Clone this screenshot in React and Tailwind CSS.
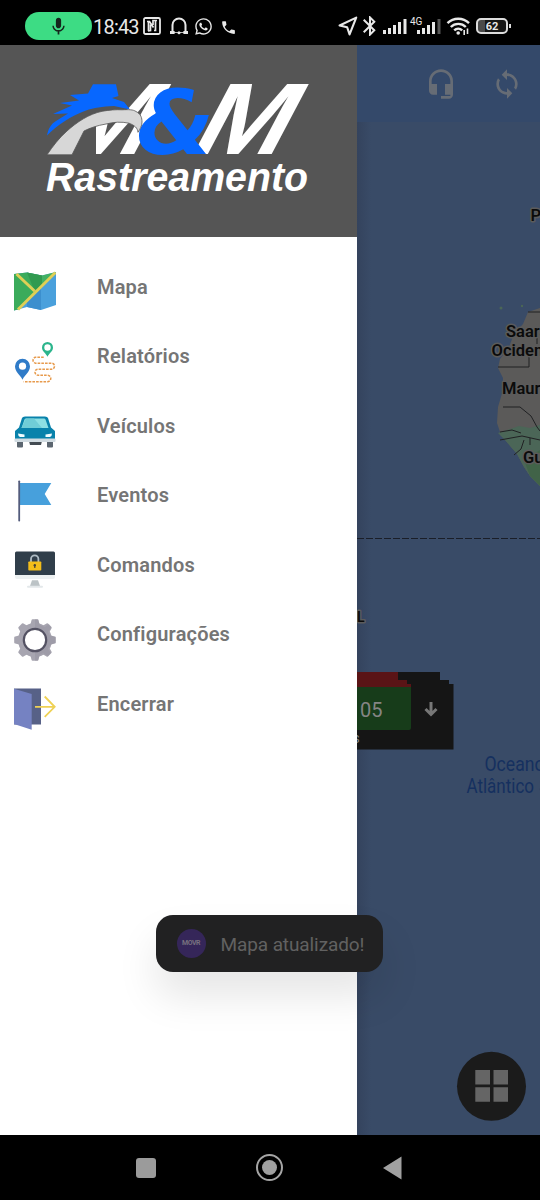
import React from "react";
import { MdHeadsetMic, MdSync, MdMic, MdBluetooth, MdPhone } from "react-icons/md";
import { FaWhatsapp } from "react-icons/fa";

function StatusBar() {
  return (
    <header className="flex h-[45px] shrink-0 items-center bg-black pt-[7px] pl-[25px] text-[#e8e8e8]">
      <div className="flex h-7 w-[67px] items-center justify-center rounded-full bg-[#3ddc84] text-[#15251c]">
        <MdMic size={21} />
      </div>
      <span className="ml-px w-[48px] pt-px text-[20px] leading-none tracking-[-0.8px]">18:43</span>
      <svg className="ml-[2px]" width="18" height="18" viewBox="0 0 18 18" fill="none" stroke="#e8e8e8" strokeWidth="1.800">
        <rect x="1" y="1" width="16" height="16" rx="1.500" />
        <path d="M4 4.500H6.500L10.500 10.500M5.500 4.500V14M7.500 7.500V13.500L5 14M14 3.500H10V8M12.500 4V13.500H11" strokeWidth="1.700" />
      </svg>
      <svg className="ml-[8px]" width="20" height="19" viewBox="0 0 20 19" fill="none" stroke="#e8e8e8" strokeWidth="2">
        <path d="M3.500 15V8a6.500 6.500 0 0 1 13 0V15" />
        <path d="M1 15.500h4.600M14.400 15.500h4.600" strokeWidth="3.200" />
        <path d="M5 15.500H15" strokeWidth=".8" />
        <circle cx="10" cy="15.800" r="1.500" fill="#e8e8e8" stroke="none" />
      </svg>
      <FaWhatsapp className="ml-[5px]" size={19} />
      <MdPhone className="mt-[2px] ml-[7px]" size={17} />
      <div className="ml-auto flex items-center pr-[29px]">
        <svg width="20" height="20" viewBox="0 0 19 19" fill="none" stroke="#e8e8e8" strokeWidth="2" strokeLinejoin="round">
          <path d="M17.300 1.500 1.500 9l7.200 1.700L11 17.500z" />
        </svg>
        <MdBluetooth className="ml-0" size={24} />
        <svg className="ml-0" width="60" height="22" viewBox="0 0 60 22" fill="#e8e8e8">
          <rect x="1" y="15" width="3" height="4" />
          <rect x="6" y="13" width="3" height="6" />
          <rect x="11" y="10" width="3" height="9" />
          <rect x="16" y="7" width="3" height="12" />
          <rect x="21.500" y="4" width="3" height="15" />
          <text x="28" y="10" fontSize="10" fontFamily="Roboto, sans-serif">4G</text>
          <rect x="35" y="15" width="3" height="4" />
          <rect x="40" y="13" width="3" height="6" />
          <rect x="45" y="10" width="3" height="9" />
          <rect x="50" y="7" width="3" height="12" />
          <rect x="55.500" y="4" width="3" height="15" fill="#555" />
        </svg>
        <svg className="ml-[4px]" width="25" height="20" viewBox="0 0 25 20" fill="none" stroke="#e8e8e8" strokeWidth="2.400">
          <path d="M1.500 7.200a15.300 15.300 0 0 1 21.500 0M4.800 11a10.600 10.600 0 0 1 15 0M8.200 14.400a5.800 5.800 0 0 1 8 0" />
          <circle cx="12.200" cy="17" r="1.800" fill="#e8e8e8" stroke="none" />
          <path d="M18.200 14v5M21.500 12.500v5.500" strokeWidth="1.600" />
        </svg>
        <div className="ml-[5px] flex h-4 w-[32px] items-center justify-center rounded-[5px] border-2 border-[#dcdcdc] bg-[linear-gradient(90deg,#4a4a4a_25%,#161616_25%)] text-[11px] font-bold leading-none">
          62
        </div>
        <div className="ml-px h-1 w-[2px] bg-[#dcdcdc]" />
      </div>
    </header>
  );
}

function Logo() {
  return (
    <svg className="h-[140px] w-[300px] overflow-visible" viewBox="30 70 300 140" aria-label="M&M Rastreamento">
      <defs>
        <clipPath id="firstLetter">
          <path d="M97 120H127V80H190V156H97z" />
        </clipPath>
      </defs>
      <g fontFamily="'Liberation Sans', sans-serif" fontWeight="700" fontSize="101.700" fill="#fff">
        <g clipPath="url(#firstLetter)">
          <text transform="matrix(1.1 0 -.53 1 49.500 154)">M</text>
        </g>
        <text transform="matrix(1.1 0 -.53 1 187 154)">M</text>
      </g>
      <text
        x="137.500"
        y="153.500"
        fontFamily="'DejaVu Sans', sans-serif"
        fontStyle="italic"
        fontWeight="700"
        fontSize="89"
        fill="#0767ff"
      >
        &amp;
      </text>
      <path
        d="M48 135.500C49 129 52 124 57 121L69 113.500 54 114 73 105.500 61 103 80 100.500 71 95 89 93.500 94 84.300H117L119.500 96 113 98 125 102 131 109.500 115 106C103 106.500 95 108 87 110.500C72 116 58 125 48 135.500z"
        fill="#0767ff"
      />
      <path
        d="M48 154.800C54 146 60 138 68 131C78 122 90 114 103 111.300C110 110 117 109.500 123 109.800C130 109.500 134 109.500 137 111.500C142 114 143 118 143 122C143 126 141 129 139 132.300C138.500 128 136 125.500 130 123.200C122 121.500 115 122 107 124C98 125.500 91 128 85 131L73 154.800z"
        fill="#d7d7d7"
        stroke="#555"
        strokeWidth=".8"
      />
      <text
        x="47"
        y="190.500"
        textLength="262"
        lengthAdjust="spacingAndGlyphs"
        fontFamily="'Liberation Sans', sans-serif"
        fontStyle="italic"
        fontWeight="700"
        fontSize="40"
        fill="#fff"
      >
        Rastreamento
      </text>
    </svg>
  );
}

const icons = {
  map: (
    <>
      <path d="M0 3 13 1.5 28 4.5 42 1V34L27 39 13 36 0 39.5z" fill="#4aa0dc" />
      <path d="M13 1.5 28 4.5V15L6 38 0 39.5V3z" fill="#3bab5b" />
      <path d="M28 4.5 42 1 28 15z" fill="#43b163" />
      <path d="M13 1.5 28 4.5V15L20.500 20z" fill="#319a50" />
      <path d="M27 15V39L13 36V30z" fill="#3c8fce" />
      <path d="M2.5 3 20.5 20M41.5 1.5 4 38.5" stroke="#dfcf56" strokeWidth="3" fill="none" />
    </>
  ),
  route: (
    <>
      <path
        d="M29.7 16.3H21.5A3 3 0 0 0 21.5 22.2H37.5A3 3 0 0 1 37.5 28.2H24A3 3 0 0 0 24 34.2H33.5A3.2 3.2 0 0 1 33.5 40.7H9.5"
        fill="none"
        stroke="#e79a4c"
        strokeWidth="1.5"
        strokeDasharray="2.6 1.1"
      />
      <path d="M8.5 38.7C6 33.5 1 31 1 25.3a7.5 7.5 0 0 1 15 0C16 31 11 33.5 8.5 38.7z" fill="#2f7bc8" />
      <circle cx="8.5" cy="25.2" r="3.6" fill="#fff" />
      <path d="M33.5 15.8C32 12 28 10.500 28 6.400a5.500 5.500 0 0 1 11 0C39 10.500 35 12 33.500 15.800z" fill="#2bb58c" />
      <circle cx="33.500" cy="6.500" r="3.200" fill="#fff" />
    </>
  ),
  car: (
    <>
      <path d="M3 31h6v5.500a1 1 0 0 1-1 1H4a1 1 0 0 1-1-1zM33 31h6v5.500a1 1 0 0 1-1 1h-4a1 1 0 0 1-1-1z" fill="#5c6670" />
      <path d="M15 31h13l-1 4H16z" fill="#434b52" />
      <path d="M1 21 5 17.500 8 8Q8.600 6.500 11 6.500H31Q33.400 6.500 34 8L37 17.500 41 21V30H1z" fill="#0982ab" />
      <path d="M7.500 18 10.500 9.500Q10.800 8.500 12 8.500H30Q31.200 8.500 31.500 9.500L34.500 18z" fill="#8ddfe3" />
      <path d="M12 8.500H20L28 18H7.500z" fill="#70cdd7" />
      <path d="M4 23.500 10.500 24.500V27H6Q4 26 4 23.500zM38 23.500 31.500 24.500V27H36Q38 26 38 23.500z" fill="#f2fdff" />
      <rect y="28.500" x="0.500" width="41" height="3.500" rx="1" fill="#d2dce2" />
    </>
  ),
  flag: (
    <>
      <path d="M6 3H37.300L30.700 14 37.300 25H6z" fill="#47a0dc" />
      <rect x="4.300" y="0.500" width="1.800" height="41" rx=".8" fill="#535c7c" />
    </>
  ),
  monitor: (
    <>
      <path d="M1 26V4Q1 2.500 2.500 2.500H39.500Q41 2.500 41 4V26z" fill="#303e4a" />
      <path d="M1 26H41V28Q41 30 39 30H3Q1 30 1 28z" fill="#edf1f2" />
      <path d="M18 31.200H24L26 37H16z" fill="#bcc3c6" />
      <rect x="13" y="36.800" width="16" height="2" rx="1" fill="#e3e8ea" />
      <path d="M17 13V10A3.700 3.700 0 0 1 24.400 10V13" fill="none" stroke="#aebbc3" strokeWidth="1.800" />
      <rect x="14.300" y="12.500" width="13" height="9" rx=".8" fill="#f2bd1a" />
      <circle cx="20.800" cy="16.300" r="1.200" fill="#45413a" />
      <path d="M20.200 16h1.200v3h-1.200z" fill="#45413a" />
    </>
  ),
  gear: (
    <>
      <circle cx="21" cy="21" r="14" fill="none" stroke="#a7a5b0" strokeWidth="6" />
      <g fill="#a7a5b0">
        {[0, 45, 90, 135, 180, 225, 270, 315].map((a) => (
          <path key={a} d="M16 7 17.500 1.200Q17.700.200 18.600.200H23.400Q24.300.200 24.500 1.200L26 7z" transform={`rotate(${a} 21 21)`} />
        ))}
      </g>
      <path d="M21 .200H23.400Q24.300.200 24.500 1.200L25.700 6 31 8 35 5 37.500 8 34 13 36 16.500 41.500 18V24L36 26 34 30 37 34 34 37 29 34 25.500 36 24 41.800H21z" fill="#8b8896" opacity=".3" />
      <circle cx="21" cy="21" r="11.200" fill="#fff" stroke="#545263" strokeWidth="2.200" />
    </>
  ),
  door: (
    <>
      <rect y=".500" width="27" height="36" fill="#576187" />
      <path d="M0 .800 17.700 6V41.700L0 36z" fill="#7582c2" />
      <path d="M21 18.800H40.500M30.700 8.500 40.700 18.800 30.700 28.800" fill="none" stroke="#efd154" strokeWidth="1.800" />
    </>
  ),
};

const items = [
  ["map", "Mapa"],
  ["route", "Relatórios"],
  ["car", "Veículos"],
  ["flag", "Eventos"],
  ["monitor", "Comandos"],
  ["gear", "Configurações"],
  ["door", "Encerrar"],
];

function Drawer() {
  return (
    <aside className="flex w-[357px] shrink-0 flex-col bg-white">
      <div className="flex h-[192px] items-start justify-center bg-[#555] pt-[25px]">
        <Logo />
      </div>
      <nav className="pt-[20.500px]">
        {items.map(([icon, label]) => (
          <a key={label} className="flex h-[69.500px] items-center pl-[14px]">
            <svg className="size-[42px]" viewBox="0 0 42 42">
              {icons[icon]}
            </svg>
            <span className="ml-[41px] pb-[11px] text-[20px] font-semibold tracking-[0.17px] text-[#757575]">{label}</span>
          </a>
        ))}
      </nav>
    </aside>
  );
}

function MapCanvas() {
  const halo = { paintOrder: "stroke", stroke: "#5b5b5b", strokeWidth: 3, strokeLinejoin: "round" };
  return (
    <svg className="h-[1013px] w-[183px]" viewBox="357 122 183 1013" fontFamily="Roboto, sans-serif">
      <path
        d="M540 308 528 312 523 324 514 334 509 347 500 359 498 368 503 378 503 390 498 407 497 423 500 432 505 440 517 454 524 467 530 476 540 486z"
        fill="#5b5a59"
      />
      <path d="M498 433 519 426 530 428 540 425V486L530 476 524 467 517 454 505 440z" fill="#4b6657" />
      <path d="M524 460 540 450V486L530 476z" fill="#416348" />
      <path
        d="M528 312H540M498 367H529V356M537 344V338M503 407 520 407 531 416 537 427 540 431M500 432 512 430 521 433M500 440 522 436 540 440M524 440 521 449 514 455M530 438V445"
        fill="none"
        stroke="#202123"
        strokeWidth="1"
      />
      <circle cx="501" cy="308" r="1.500" fill="#4b6657" />
      <circle cx="522" cy="306" r="1.200" fill="#4b6657" />
      <g fill="#0b0b0b" fontSize="16.500" fontWeight="600" style={halo}>
        <text x="530.500" y="221">P</text>
        <text x="506" y="336.500">Saara</text>
        <text x="491.500" y="356">Ocidental</text>
        <text x="502" y="393.500">Mauritânia</text>
        <text x="523" y="463">Guiné</text>
        <text x="357" y="622" fontSize="14">L</text>
      </g>
      <path d="M357 538.500H540" stroke="#1a1e28" strokeWidth="1" strokeDasharray="7 2" />
      <path d="M357 672H440V680H449V684H453.500V749.500H357z" fill="#151515" />
      <path d="M357 672H398V680H407V684H411V690H357z" fill="#5a1416" />
      <path d="M357 687H411V728Q411 730 409 730H357z" fill="#173c1a" />
      <text x="360" y="717" fontSize="20" fill="#858585">05</text>
      <text x="352.500" y="743" fontSize="14" fill="#858585">s</text>
      <path d="M431 702V714M425.500 709 431 714.500 436.500 709" fill="none" stroke="#777" strokeWidth="3" />
      <g fill="#15305f" fontSize="20">
        <text x="484.500" y="771" textLength="60" lengthAdjust="spacingAndGlyphs">Oceano</text>
        <text x="466.500" y="792.500" textLength="67.500" lengthAdjust="spacingAndGlyphs">Atlântico</text>
        <text x="539" y="792.500">S</text>
      </g>
      <circle cx="491.500" cy="1086.300" r="34.500" fill="#1b1b1b" />
      <path d="M475.300 1070H490V1084.500H475.300zM493.500 1070H508V1084.500H493.500zM475.300 1087.300H490V1101.800H475.300zM493.500 1087.300H508V1101.800H493.500z" fill="#656565" />
    </svg>
  );
}

export default function App() {
  return (
    <div className="relative flex h-[1200px] w-[540px] flex-col overflow-hidden bg-black font-['Roboto',sans-serif]">
      <StatusBar />
      <main className="flex h-[1090px] shrink-0">
        <Drawer />
        <section className="flex w-[183px] flex-col bg-[#394b67] bg-[linear-gradient(90deg,#34435d,#394b67_14px)]">
          <div className="flex h-[77px] items-center gap-[34px] bg-[#34496a] pl-[68px] text-[#666c75]">
            <MdHeadsetMic size={32} />
            <MdSync size={32} />
          </div>
          <MapCanvas />
        </section>
      </main>
      <footer className="flex h-[65px] items-center bg-black pl-[136px]">
        <div className="size-5 rounded-[3px] bg-[#9b9b9b]" />
        <div className="ml-[100px] flex size-[27px] items-center justify-center rounded-full border-2 border-[#a5a5a5]">
          <div className="size-[15px] rounded-full bg-[#a0a0a0]" />
        </div>
        <svg className="ml-[100px]" width="19" height="24" viewBox="0 0 19 24">
          <path d="M18.500.500V23.500L0 12z" fill="#a0a0a0" />
        </svg>
      </footer>
      <div className="absolute top-[915px] left-[156px] flex h-[57px] w-[227px] items-center rounded-[17px] bg-[#212122] pl-[20.500px] shadow-[0_24px_40px_rgba(0,0,0,0.1)]">
        <div className="flex size-[29px] items-center justify-center rounded-full bg-[#352659] text-[7px] font-bold tracking-[-0.5px] text-[#77717f]">
          MOVR
        </div>
        <span className="ml-[15px] pt-[3px] text-[19px] tracking-[-0.1px] whitespace-nowrap text-[#616161]">Mapa atualizado!</span>
      </div>
    </div>
  );
}
